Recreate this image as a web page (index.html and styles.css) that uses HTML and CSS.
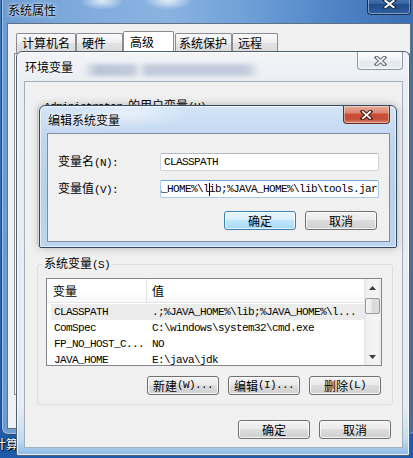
FILE: index.html
```html
<!DOCTYPE html>
<html lang="zh-CN">
<head>
<meta charset="utf-8">
<title>环境变量</title>
<link rel="stylesheet" href="styles.css">
</head>
<body>
<div class="desktop">
  <span class="desk-label">计算机</span>

  <div class="win sysprops">
    <div class="titlebar">
      <span class="title">系统属性</span>
      <div class="close close-dark">
        <svg width="15" height="10" viewBox="0 0 15 10"><path d="M3 1.5L12 8.5M12 1.5L3 8.5" stroke="#1d2b40" stroke-width="3.8" stroke-linecap="square"/><path d="M3.4 1.8L11.6 8.2M11.6 1.8L3.4 8.2" stroke="#fff" stroke-width="1.9" stroke-linecap="square"/></svg>
      </div>
    </div>
    <div class="client">
      <div class="tabs">
        <div class="tab t1">计算机名</div>
        <div class="tab t2">硬件</div>
        <div class="tab t3 sel">高级</div>
        <div class="tab t4">系统保护</div>
        <div class="tab t5">远程</div>
      </div>
      <div class="tabpage"></div>
    </div>
  </div>

  <div class="win env">
    <div class="titlebar">
      <span class="title">环境变量</span>
      <div class="glassblur"></div>
      <div class="close close-inactive">
        <svg width="13" height="10" viewBox="0 0 13 10"><path d="M2.5 1.5L10.5 8.5M10.5 1.5L2.5 8.5" stroke="#6a6e74" stroke-width="3.8" stroke-linecap="square"/><path d="M2.9 1.8L10.1 8.2M10.1 1.8L2.9 8.2" stroke="#f6f7f8" stroke-width="1.8" stroke-linecap="square"/></svg>
      </div>
    </div>
    <div class="client">
      <fieldset class="group g-user">
        <legend><span class="m">Administrator </span>的用户变量<span class="m">(U)</span></legend>
      </fieldset>
      <fieldset class="group g-sys">
        <legend>系统变量<span class="m">(S)</span></legend>
        <div class="listview">
          <div class="lv-main">
            <div class="lv-head">
              <div class="c1">变量</div>
              <div class="c2">值</div>
            </div>
            <div class="lv-rows">
              <div class="lv-row sel"><div class="c1 m">CLASSPATH</div><div class="c2 m">.;%JAVA_HOME%\lib;%JAVA_HOME%\l...</div></div>
              <div class="lv-row"><div class="c1 m">ComSpec</div><div class="c2 m">C:\windows\system32\cmd.exe</div></div>
              <div class="lv-row"><div class="c1 m">FP_NO_HOST_C...</div><div class="c2 m">NO</div></div>
              <div class="lv-row"><div class="c1 m">JAVA_HOME</div><div class="c2 m">E:\java\jdk</div></div>
            </div>
          </div>
          <div class="scrollbar">
            <div class="sb-btn"><svg width="7" height="4" viewBox="0 0 7 4"><path d="M3.5 0L7 4H0Z" fill="#3c3c3c"/></svg></div>
            <div class="sb-thumb"></div>
            <div class="sb-track"></div>
            <div class="sb-btn"><svg width="7" height="4" viewBox="0 0 7 4"><path d="M0 0H7L3.5 4Z" fill="#3c3c3c"/></svg></div>
          </div>
        </div>
        <div class="btnrow">
          <div class="btn">新建<span class="m">(W)...</span></div>
          <div class="btn">编辑<span class="m">(I)...</span></div>
          <div class="btn">删除<span class="m">(L)</span></div>
        </div>
      </fieldset>
      <div class="btnrow bottom">
        <div class="btn">确定</div>
        <div class="btn">取消</div>
      </div>
    </div>
  </div>

  <div class="win edit">
    <div class="titlebar">
      <span class="title">编辑系统变量</span>
      <div class="close close-red">
        <svg width="13" height="10" viewBox="0 0 13 10"><path d="M2.5 1.5L10.5 8.5M10.5 1.5L2.5 8.5" stroke="#4a1a12" stroke-width="3.8" stroke-linecap="square"/><path d="M2.9 1.8L10.1 8.2M10.1 1.8L2.9 8.2" stroke="#fff" stroke-width="1.8" stroke-linecap="square"/></svg>
      </div>
    </div>
    <div class="client">
      <div class="field">
        <label>变量名<span class="m">(N):</span></label>
        <div class="input"><span class="m">CLASSPATH</span></div>
      </div>
      <div class="field">
        <label>变量值<span class="m">(V):</span></label>
        <div class="input focus"><span class="m val">.;%JAVA_HOME%\l<i class="caret"></i>ib;%JAVA_HOME%\lib\tools.jar</span></div>
      </div>
      <div class="btnrow">
        <div class="btn default">确定</div>
        <div class="btn">取消</div>
      </div>
    </div>
  </div>
</div>
</body>
</html>
```

FILE: styles.css
```css
* { box-sizing: border-box; }
html, body { margin: 0; padding: 0; }
body {
  width: 413px;
  height: 458px;
  overflow: hidden;
  font-family: "Noto Sans CJK SC", "Noto Sans", sans-serif;
  font-size: 12px;
  line-height: 16px;
  color: #000;
}
.m {
  font-family: "Liberation Mono", "Noto Sans CJK SC", monospace;
  font-size: 11px;
  letter-spacing: -0.6px;
}

.desktop {
  position: relative;
  width: 413px;
  height: 458px;
  overflow: hidden;
  background: linear-gradient(180deg, #3f7bc4 0%, #2a67b3 60%, #1d5aa8 100%);
}
.desk-label {
  position: absolute;
  left: -6px;
  top: 436px;
  color: #fff;
  text-shadow: 0 0 2px #000, 1px 1px 1px #000;
}

/* windows */
.win {
  position: absolute;
  display: flex;
  flex-direction: column;
  border: 1px solid;
}
.titlebar {
  display: flex;
  align-items: flex-start;
  flex-shrink: 0;
}
.title {
  margin-left: 1px;
  white-space: nowrap;
  text-shadow: 0 0 5px rgba(255,255,255,.9), 0 0 2px rgba(255,255,255,.9);
}
.close {
  margin-left: auto;
  display: flex;
  align-items: center;
  justify-content: center;
  border-top: none;
  border-radius: 0 0 4px 4px;
}

/* 系统属性 */
.sysprops {
  left: 1px;
  top: -7px;
  width: 416px;
  height: 442px;
  border-color: #2b4769;
  border-radius: 7px;
  padding: 0 5px 5px 5px;
  background:
    radial-gradient(ellipse 22px 9px at 100px 7px, rgba(255,255,255,.75), rgba(255,255,255,0)),
    radial-gradient(ellipse 24px 10px at 166px 6px, rgba(255,255,255,.8), rgba(255,255,255,0)),
    linear-gradient(90deg, #6c9bd2 0%, #80abdc 20%, #8ab3e0 40%, #6d9fd7 60%, #4f84c6 80%, #3a6eb5 100%);
  box-shadow: inset 0 0 0 1px rgba(255,255,255,.4);
}
.sysprops .titlebar { height: 29px; }
.sysprops .title { margin-top: 8px; }
.close-dark {
  width: 44px;
  height: 21px;
  border: 1px solid #1a2f4d;
  border-top: none;
  background: linear-gradient(#5a86bd, #3362a0 50%, #204c88 50%, #2d5f9f);
  box-shadow: inset 0 0 0 1px rgba(255,255,255,.4);
}
.sysprops .client {
  flex: 1;
  background: #f0f0f0;
  border: 1px solid #5f7185;
  padding: 7px 0 0 6px;
}
.tabs {
  display: flex;
  align-items: flex-end;
  height: 22px;
  margin-left: 2px;
}
.tab {
  height: 20px;
  border: 1px solid #898c95;
  border-bottom: none;
  border-radius: 2px 2px 0 0;
  background: linear-gradient(#f8f8f8, #eeeeee 50%, #e2e2e2 50%, #d9d9d9);
  padding-left: 5px;
  line-height: 18px;
  white-space: nowrap;
}
.tab.sel {
  height: 22px;
  background: #fff;
  padding-left: 6px;
  line-height: 19px;
}
.t1 { width: 60px; }
.t2 { width: 47px; }
.t3 { width: 51px; }
.t4 { width: 57px; margin-left: 1px; padding-left: 3px; }
.t5 { width: 46px; }
.tabpage {
  height: 342px;
  border: 1px solid #898c95;
  background: #fff;
}

/* 环境变量 */
.env {
  left: 16px;
  top: 51px;
  width: 394px;
  height: 405px;
  border-color: #4f5f70;
  border-radius: 6px 6px 2px 2px;
  padding: 0 6px 7px 7px;
  background: linear-gradient(180deg, #f2f4f7 0%, #eaeef3 8%, #e6ecf2 88%, #c4dcf0 96%, #8dbbe6 100%);
  box-shadow: inset 0 0 0 1px rgba(255,255,255,.75);
}
.env .titlebar { height: 29px; }
.env .title { margin-top: 7px; }
.glassblur {
  width: 177px;
  height: 12px;
  margin: 12px 0 0 10px;
  background: linear-gradient(90deg, rgba(90,115,160,0), rgba(90,115,160,.35) 8%, rgba(90,115,160,.3) 28%, rgba(90,115,160,.05) 32%, rgba(90,115,160,.3) 36%, rgba(90,115,160,.3) 92%, rgba(90,115,160,0));
  filter: blur(2px);
}
.close-inactive {
  width: 46px;
  height: 18px;
  border: 1px solid #8c96a2;
  border-top: none;
  background: linear-gradient(#fbfcfd, #eef2f6 50%, #e2e8ee 50%, #e9eef3);
  box-shadow: inset 0 0 0 1px rgba(255,255,255,.8);
}
.env .client {
  flex: 1;
  background: #f0f0f0;
  border: 1px solid #a3afbb;
  padding: 15px 9px 0 12px;
}
fieldset.group {
  margin: 0;
  padding: 5px 10px 11px 8px;
  border: 1px solid #d5dfe5;
  border-radius: 3px;
  min-width: 0;
  height: 150px;
}
fieldset.group legend {
  padding: 0 2px;
  margin-left: -4px;
  line-height: 16px;
  white-space: nowrap;
}
fieldset.g-sys { margin-top: 8px; }

.listview {
  display: flex;
  height: 88px;
  border: 1px solid #828790;
  background: #fff;
}
.lv-main {
  flex: 1;
  min-width: 0;
  overflow: hidden;
}
.lv-head {
  display: flex;
  height: 24px;
  background: linear-gradient(#ffffff, #ffffff 55%, #f6f7f9);
  border-bottom: 1px solid #e5e5e5;
}
.lv-head .c1 {
  width: 100px;
  padding-left: 6px;
  border-right: 1px solid #e5e5e5;
  display: flex;
  align-items: center;
}
.lv-head .c2 {
  padding-left: 5px;
  display: flex;
  align-items: center;
}
.lv-rows { margin-top: 1px; }
.lv-row {
  display: flex;
  align-items: center;
  height: 16px;
  margin-left: 4px;
  white-space: nowrap;
}
.lv-row.sel { background: #ececec; }
.lv-row .c1 { width: 96px; padding-left: 3px; flex-shrink: 0; }
.lv-row .c2 { padding-left: 5px; }

.scrollbar {
  width: 17px;
  flex-shrink: 0;
  display: flex;
  flex-direction: column;
  background: linear-gradient(90deg, #e3e3e3, #f1f1f1 20%, #f5f5f5 80%, #eaeaea);
}
.sb-btn {
  height: 17px;
  display: flex;
  align-items: center;
  justify-content: center;
}
.sb-thumb {
  height: 16px;
  margin: 2px 1px 0;
  border: 1px solid #979797;
  border-radius: 2px;
  background: linear-gradient(90deg, #f5f5f5, #e8e8e8 50%, #d9d9d9 50%, #dedede);
}
.sb-track { flex: 1; }

.btnrow {
  display: flex;
  justify-content: flex-end;
  gap: 9px;
}
.g-sys .btnrow { margin-top: 10px; padding-right: 1px; }
.env .bottom { margin-top: 15px; padding-right: 2px; }

.btn {
  width: 72px;
  height: 19px;
  border: 1px solid #707070;
  border-radius: 3px;
  background: linear-gradient(#f2f2f2, #ebebeb 45%, #dddddd 50%, #cfcfcf);
  box-shadow: inset 0 0 0 1px rgba(255,255,255,.75);
  display: flex;
  align-items: center;
  justify-content: center;
  line-height: 17px;
  white-space: nowrap;
}
.btn.default {
  border-color: #3c7fb1;
  background: linear-gradient(#eaf6fd, #d9f0fc 45%, #bee6fd 50%, #a7d9f5);
}

/* 编辑系统变量 */
.edit {
  left: 39px;
  top: 105px;
  width: 358px;
  height: 143px;
  border-color: #34495f;
  border-radius: 6px 6px 2px 2px;
  padding: 0 6px 5px 7px;
  background:
    radial-gradient(ellipse 60px 14px at 90px 8px, rgba(255,255,255,.5), rgba(255,255,255,0)),
    linear-gradient(180deg, #d4e5f6 0%, #bfd6ef 25%, #b8d1eb 60%, #bdd6ef 100%);
  box-shadow: inset 0 0 0 1px rgba(255,255,255,.6), 0 0 8px rgba(0,0,0,.25);
}
.edit .titlebar { height: 27px; }
.edit .title { margin-top: 6px; }
.close-red {
  width: 47px;
  height: 18px;
  border: 1px solid #6b2a22;
  border-top: none;
  background: linear-gradient(#e9ab9b, #db8571 40%, #c84a32 50%, #c5533a 80%, #d98a70);
  box-shadow: inset 0 0 0 1px rgba(255,255,255,.4);
}
.edit .client {
  flex: 1;
  background: #f0f0f0;
  border: 1px solid #7b8ea3;
  padding: 19px 10px 0 10px;
}
.field {
  display: flex;
  align-items: center;
  height: 18px;
}
.field + .field { margin-top: 9px; }
.field label {
  width: 102px;
  flex-shrink: 0;
  white-space: nowrap;
}
.input {
  flex: 1;
  height: 18px;
  border: 1px solid #cdd3da;
  border-top-color: #b5b9bf;
  border-radius: 2px;
  background: #fff;
  padding: 0 3px;
  display: flex;
  align-items: center;
  overflow: hidden;
  white-space: nowrap;
}
.input.focus {
  border-color: #6fa3d6 #a9cbea #a9cbea #a9cbea;
  justify-content: flex-end;
  padding: 0 1px;
}
.val { flex-shrink: 0; }
.caret {
  display: inline-block;
  width: 0;
  height: 13px;
  border-left: 1px solid #000;
  margin-right: -1px;
  vertical-align: middle;
}
.edit .btnrow { margin-top: 13px; padding-right: 2px; }
```
